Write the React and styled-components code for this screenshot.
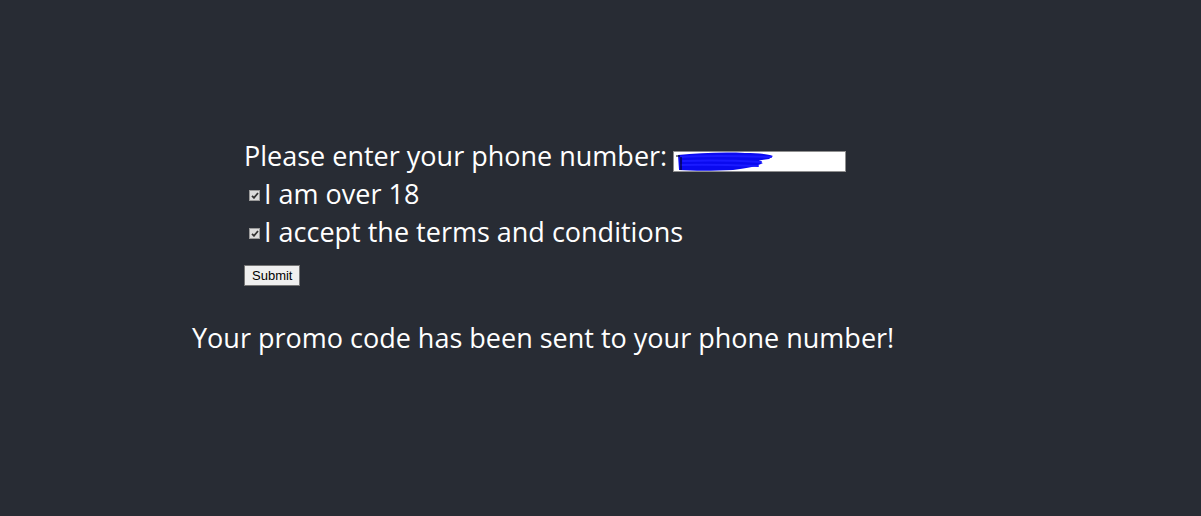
import React from "react";
import styled, { createGlobalStyle } from "styled-components";

const Global = createGlobalStyle`
  html, body { margin: 0; padding: 0; background: #282c34; }
  body { font-family: "Open Sans", "Noto Sans", sans-serif; color: #ffffff; }
`;

const Page = styled.div`
  width: 1201px;
  height: 516px;
  background: #282c34;
  box-sizing: border-box;
  padding: 137px 0 0 192px;
`;

const Form = styled.form`
  display: flex;
  flex-direction: column;
  align-items: flex-start;
  padding-left: 52px;
`;

const Row = styled.label`
  display: flex;
  align-items: center;
  font-size: 27px;
  line-height: 38px;
  height: 38px;
  white-space: nowrap;
`;

const PhoneWrap = styled.span`
  position: relative;
  display: block;
  align-self: flex-start;
  width: 173px;
  height: 21px;
  margin-left: 6px;
  margin-top: 14px;
  line-height: 0;
`;

const PhoneInput = styled.input`
  display: block;
  box-sizing: border-box;
  width: 100%;
  height: 100%;
  border: 1px solid #8f8f8f;
  background: #ffffff;
  padding: 0;
  margin: 0;
`;

const Scribble = styled.svg`
  position: absolute;
  left: 0;
  top: 0;
  pointer-events: none;
`;

const Check = styled.span`
  display: inline-flex;
  align-items: center;
  justify-content: center;
  width: 11px;
  height: 11px;
  margin: 2px 4px 0 5px;
  box-sizing: border-box;
  background: #dcdcdc;
  border: 1px solid #9a9a9a;
`;

const SubmitButton = styled.button`
  margin-top: 14px;
  font-family: "Liberation Sans", Arial, sans-serif;
  font-size: 13px;
  line-height: 15px;
  padding: 2px 7px 2px;
  background: #efefef;
  color: #000;
  border: 1px solid #767676;
  border-radius: 0;
`;

const Message = styled.p`
  margin: 33px 0 0;
  font-size: 27px;
  line-height: 38px;
  white-space: nowrap;
`;

function CheckMark() {
  return (
    <Check>
      <svg width="8" height="7" viewBox="0 0 8 7">
        <path d="M1 3.8 L3 5.8 L7 1" fill="none" stroke="#333" strokeWidth="1.8" />
      </svg>
    </Check>
  );
}

export default function App() {
  return (
    <>
      <Global />
      <Page>
        <Form onSubmit={(e) => e.preventDefault()}>
          <Row>
            Please enter your phone number:
            <PhoneWrap>
              <PhoneInput type="tel" aria-label="phone number" />
              <Scribble width="173" height="21" viewBox="0 0 173 21">
                <path
                  d="M5 4 C25 2 50 1 72 2 C85 2 95 3 100 5 L96 8 C88 9 80 10 90 12 C85 15 75 17 60 19 C40 20 20 20 6 19 Z"
                  fill="#0a0aef"
                />
                <path
                  d="M8 6 C40 4 70 5 98 6 M10 10 C40 9 70 10 88 11 M8 14 C35 13 60 14 85 15"
                  fill="none"
                  stroke="#1a1aff"
                  strokeWidth="2"
                  strokeLinecap="round"
                />
                <path d="M3 5 L7 5 M8 6 L8 19" stroke="#000" strokeWidth="1" />
              </Scribble>
            </PhoneWrap>
          </Row>
          <Row>
            <CheckMark />I am over 18
          </Row>
          <Row>
            <CheckMark />I accept the terms and conditions
          </Row>
          <SubmitButton type="submit">Submit</SubmitButton>
        </Form>
        <Message>Your promo code has been sent to your phone number!</Message>
      </Page>
    </>
  );
}
